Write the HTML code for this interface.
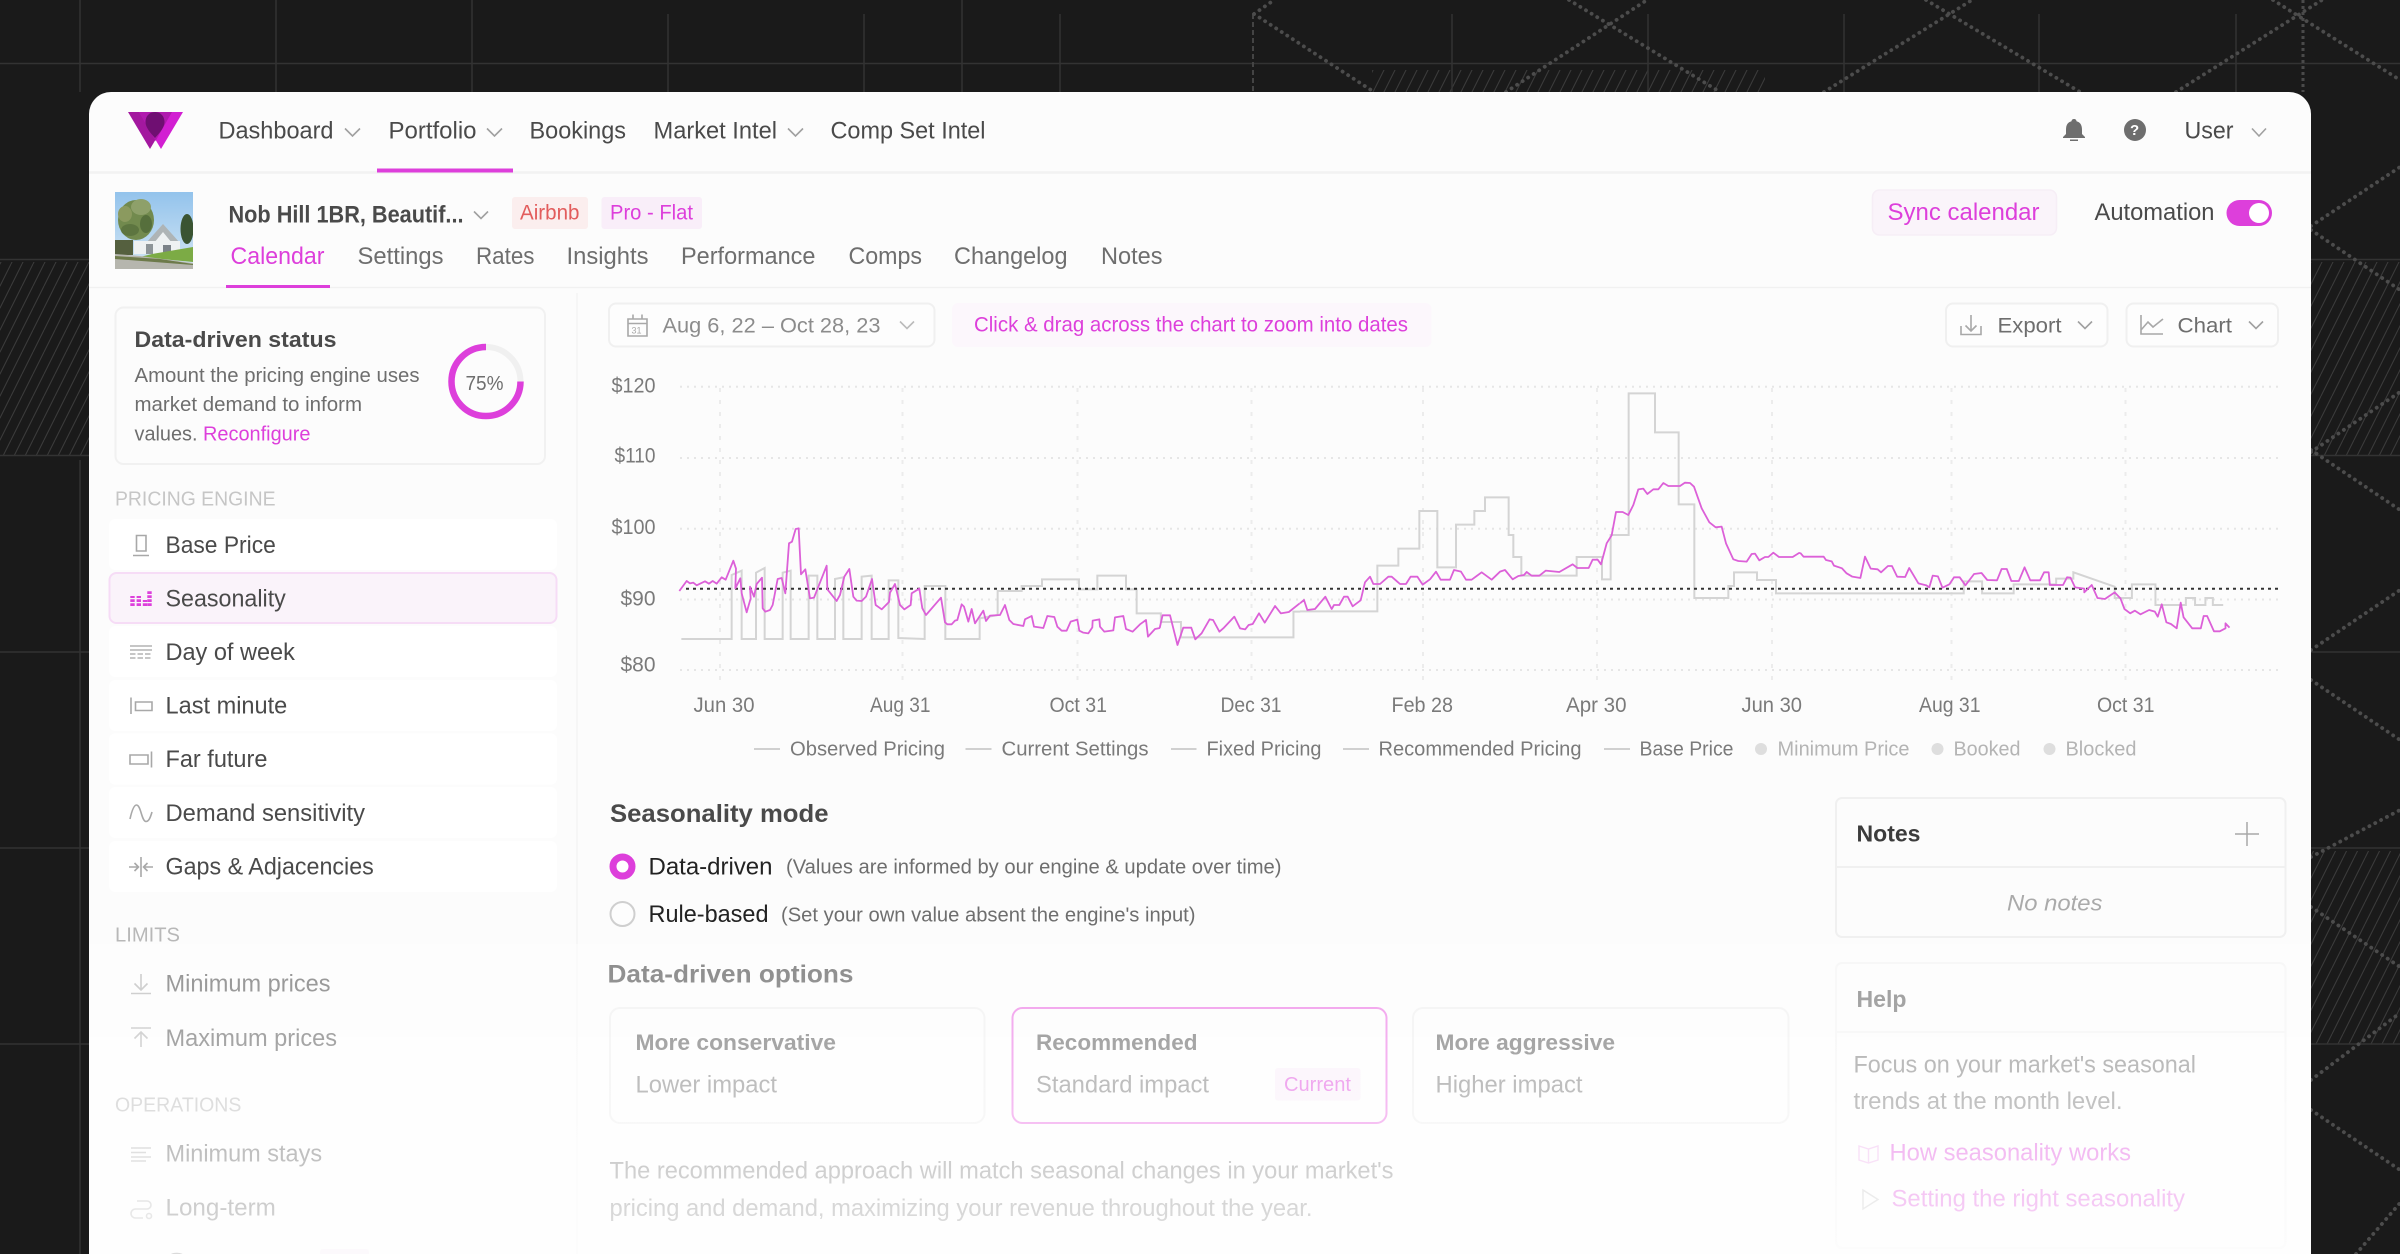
<!DOCTYPE html>
<html><head><meta charset="utf-8"><title>Seasonality</title>
<style>
html,body{margin:0;padding:0;background:#1a1a1a;width:2400px;height:1254px;overflow:hidden}
svg{display:block}
text{font-family:"Liberation Sans",sans-serif;fill:#4a4a4a;font-size:24px;transform:translate(-.5px,-.7px)}
.b{font-weight:700}
.s{font-size:20px;fill:#6e6e6e}
.t{font-size:21px;fill:#7a7a7a}
.m{fill:#dd3fdb}
.l{font-size:20px;fill:#7a7a7a}
.q{font-size:20px;fill:#b4b4b4}
.ic{fill:none;stroke:#a8a8a8;stroke-width:1.6}
.ch{fill:none;stroke:#a0a0a0;stroke-width:1.6}
.ns{vector-effect:non-scaling-stroke}
</style></head><body>
<svg xmlns="http://www.w3.org/2000/svg" width="2400" height="1254" viewBox="0 0 2400 1254">
<defs>
<pattern id="h" width="11" height="22" patternUnits="userSpaceOnUse"><path d="M11,0L0,22M0,0L-1,2M12,20L11,22" stroke="#3c3c3c" stroke-width="1" fill="none"/></pattern>
</defs>
<rect width="2400" height="1254" fill="#1a1a1a"/>
<!-- hatches -->
<rect x="0" y="262" width="89" height="193" fill="url(#h)"/>
<rect x="2311" y="262" width="89" height="193" fill="url(#h)"/>
<rect x="2311" y="851" width="89" height="193" fill="url(#h)"/>
<rect x="1372" y="70" width="393" height="22" fill="url(#h)"/>
<!-- grid -->
<g stroke="#333" stroke-width="1.5" fill="none">
<path d="M0,63.5H2400M0,259.5H89M2311,259.5H2400M0,455.5H89M2311,455.5H2400M0,652H89M2311,652H2400M0,848H89M2311,848H2400M0,1044H89M2311,1044H2400"/>
<path d="M80,0V92M276,0V92M472,0V92M962,0V92M668,14V92M864,14V92M1060,14V92M1452,14V92M1648,14V92M1844,14V92M2039,14V92M2236,14V92M80,460V1254"/>
</g>
<path d="M1253,14V92" stroke="#444" stroke-width="2" stroke-dasharray="5 3" fill="none"/>
<path d="M2303,0V92" stroke="#4a4a4a" stroke-width="3" stroke-dasharray="3 3" fill="none"/>
<!-- dotted lattice -->
<g stroke="#4c4c4c" stroke-width="3.8" stroke-linecap="round" stroke-dasharray="0.1 6.5" fill="none">
<path d="M1254,14L1274,0M1254,14L1374,92M1506,92L1647,0M1569,0L1720,92M1824,92L1972,0M1926,0L2080,92M2176,92L2322,0M2273,0L2400,80"/>
<path d="M2311,226L2400,167M2311,230L2400,290M2311,452L2400,392M2311,450L2400,510M2311,650L2400,590M2311,680L2400,740M2311,857L2400,810M2311,907L2400,967M2311,1080L2400,1013M2311,1110L2400,1170M2356,1254L2400,1203"/>
</g>
<!-- card -->
<path d="M89,1254V114a22,22 0 0 1 22,-22H2289a22,22 0 0 1 22,22V1254Z" fill="#fcfcfc"/>
<path d="M89,172.5H2311" stroke="#f2f2f2" stroke-width="2.4"/>
<path d="M89,287.5H2311" stroke="#f1f1f1" stroke-width="1.6"/>
<path d="M577,293V1254" stroke="#f6f6f6" stroke-width="2"/>
<!-- logo -->
<polygon points="128,112 172,112 150,149" fill="#a3189f"/>
<polygon points="139,112 183,112 161,149" fill="#d21fd2"/>
<polygon points="139,112 172,112 155.5,141" fill="#b01aae"/>
<path d="M155,112c-6,0 -9.5,4.5 -9.5,10c0,6 6,12 9.5,16c3.5,-4 9.5,-10 9.5,-16c0,-5.500 -3.500,-10 -9.500,-10Z" fill="#6f0f72"/>
<!-- nav -->
<text x="219" y="139" textLength="115" lengthAdjust="spacingAndGlyphs">Dashboard</text>
<path class="ch" d="M345,128.500L352.500,136L360,128.500"/>
<text x="389" y="139" textLength="88" lengthAdjust="spacingAndGlyphs">Portfolio</text>
<path class="ch" d="M487,128.500L494.500,136L502,128.500"/>
<rect x="377" y="168.500" width="136" height="4" fill="#dd3fdb"/>
<text x="530" y="139" textLength="96.500" lengthAdjust="spacingAndGlyphs">Bookings</text>
<text x="654" y="139" textLength="123.500" lengthAdjust="spacingAndGlyphs">Market Intel</text>
<path class="ch" d="M788,128.500L795.500,136L803,128.500"/>
<text x="831" y="139" textLength="155" lengthAdjust="spacingAndGlyphs">Comp Set Intel</text>
<path d="M2074,119c-1.500,0 -2.500,1 -2.500,2.300C2067,122.500 2066,126 2066,130v4l-3,3v1h22v-1l-3,-3v-4c0,-4 -1,-7.500 -5.500,-8.700C2076.500,120 2075.500,119 2074,119ZM2070,139.500h8v1.500h-8Z" fill="#6e6e6e"/>
<circle cx="2135" cy="130" r="11" fill="#6e6e6e"/>
<text x="2130.500" y="135.500" style="font-size:15px;fill:#fff" class="b">?</text>
<text x="2185" y="139" textLength="49" lengthAdjust="spacingAndGlyphs">User</text>
<path class="ch" d="M2252,128.500L2259,136L2266,128.500"/>
<!-- thumbnail -->
<svg x="115" y="192" width="78" height="77" viewBox="115 192 78 77">
<defs><linearGradient id="sky" x1="0" y1="0" x2="0" y2="1"><stop offset="0" stop-color="#93c3ec"/><stop offset="1" stop-color="#d3e6f4"/></linearGradient></defs>
<rect x="115" y="192" width="78" height="77" fill="url(#sky)"/>
<ellipse cx="136" cy="220" rx="18" ry="20" fill="#728a4e"/>
<ellipse cx="141" cy="207" rx="10" ry="8" fill="#8ea06a"/>
<ellipse cx="125" cy="214" rx="7" ry="8" fill="#8b9a5f"/>
<ellipse cx="146" cy="224" rx="6" ry="9" fill="#566f3c"/>
<ellipse cx="130" cy="230" rx="9" ry="6" fill="#5d7540"/>
<ellipse cx="187" cy="229" rx="6.500" ry="15" fill="#3a5432"/>
<polygon points="146,243 163,224 180,243" fill="#aeb4b6"/>
<polygon points="154,243 163,232 172,243" fill="#eef1f2"/>
<rect x="134" y="241" width="46" height="13" fill="#eef1f2"/>
<rect x="146" y="244" width="7" height="10" fill="#8d9498"/>
<rect x="163" y="245" width="8" height="9" fill="#7b8288"/>
<rect x="115" y="240" width="18" height="15" fill="#55603f"/>
<polygon points="152,254 193,247 193,262 140,257" fill="#7cab45"/>
<polygon points="115,254 140,256 193,263 193,269 115,269" fill="#b6b6ae"/>
<polygon points="115,256 160,259 193,264 193,265 115,259" fill="#6d7a4a"/>
</svg>
<!-- header 2 -->
<text x="229" y="223" class="b" textLength="235" lengthAdjust="spacingAndGlyphs">Nob Hill 1BR, Beautif...</text>
<path class="ch" d="M474,211.500L481,218.500L488,211.500"/>
<rect x="512" y="197" width="76" height="32" rx="3" fill="#fbeeee"/>
<text x="520.500" y="220" style="font-size:21px;fill:#e25c5c" textLength="59.500" lengthAdjust="spacingAndGlyphs">Airbnb</text>
<rect x="601.500" y="197" width="100.500" height="32" rx="3" fill="#f9eef9"/>
<text x="610.500" y="220" class="m" style="font-size:21px" textLength="83" lengthAdjust="spacingAndGlyphs">Pro - Flat</text>
<text x="231" y="264.500" class="m" textLength="94" lengthAdjust="spacingAndGlyphs">Calendar</text>
<g style="fill:#6e6e6e">
<text x="358" y="264.500" style="fill:#6e6e6e" textLength="86" lengthAdjust="spacingAndGlyphs">Settings</text>
<text x="476.500" y="264.500" style="fill:#6e6e6e" textLength="58.500" lengthAdjust="spacingAndGlyphs">Rates</text>
<text x="567" y="264.500" style="fill:#6e6e6e" textLength="82" lengthAdjust="spacingAndGlyphs">Insights</text>
<text x="681.500" y="264.500" style="fill:#6e6e6e" textLength="134.500" lengthAdjust="spacingAndGlyphs">Performance</text>
<text x="849" y="264.500" style="fill:#6e6e6e" textLength="73.500" lengthAdjust="spacingAndGlyphs">Comps</text>
<text x="954.500" y="264.500" style="fill:#6e6e6e" textLength="113.500" lengthAdjust="spacingAndGlyphs">Changelog</text>
<text x="1101.500" y="264.500" style="fill:#6e6e6e" textLength="61.500" lengthAdjust="spacingAndGlyphs">Notes</text>
</g>
<rect x="226" y="285" width="104" height="3" fill="#dd3fdb"/>
<rect x="1872.500" y="190" width="184" height="45" rx="7" fill="#faf4fa" stroke="#f6eef6" stroke-width="1.500"/>
<text x="1888" y="220.500" class="m" textLength="152" lengthAdjust="spacingAndGlyphs">Sync calendar</text>
<text x="2095" y="220.500" textLength="120" lengthAdjust="spacingAndGlyphs">Automation</text>
<rect x="2226.500" y="200" width="45.500" height="26" rx="13" fill="#dd3fdb"/>
<circle cx="2259" cy="213" r="10" fill="#fff"/>
<!-- status card -->
<rect x="115.500" y="307.500" width="429.500" height="156.500" rx="8" fill="#fcfcfc" stroke="#f1f1f1" stroke-width="2"/>
<text x="135" y="347.500" class="b" style="font-size:22px" textLength="202" lengthAdjust="spacingAndGlyphs">Data-driven status</text>
<text x="135" y="382.500" class="s" textLength="285" lengthAdjust="spacingAndGlyphs">Amount the pricing engine uses</text>
<text x="135" y="411.500" class="s" textLength="227.500" lengthAdjust="spacingAndGlyphs">market demand to inform</text>
<text x="135" y="441" class="s" textLength="63" lengthAdjust="spacingAndGlyphs">values.</text>
<text x="203.500" y="441" class="s m" style="fill:#dd3fdb" textLength="107.500" lengthAdjust="spacingAndGlyphs">Reconfigure</text>
<circle cx="486" cy="381.500" r="34.500" fill="none" stroke="#f0f0f0" stroke-width="6"/>
<path d="M520.500,381.500A34.500,34.500 0 1 1 486,347" fill="none" stroke="#dd3fdb" stroke-width="6.500"/>
<text x="466" y="390.500" class="s" textLength="38" lengthAdjust="spacingAndGlyphs">75%</text>
<!-- sidebar -->
<text x="115.500" y="506" style="font-size:20px;fill:#c6c6c6" textLength="160.500" lengthAdjust="spacingAndGlyphs">PRICING ENGINE</text>
<g fill="#fff">
<rect x="109" y="519" width="448" height="51" rx="6"/>
<rect x="109" y="626" width="448" height="51" rx="6"/>
<rect x="109" y="680" width="448" height="51" rx="6"/>
<rect x="109" y="733.500" width="448" height="51" rx="6"/>
<rect x="109" y="787" width="448" height="51" rx="6"/>
<rect x="109" y="841" width="448" height="51" rx="6"/>
</g>
<rect x="109.500" y="573" width="447" height="50" rx="7" fill="#faf3fa" stroke="#f6dcf6" stroke-width="2"/>
<text x="166" y="553.500" textLength="110.300" lengthAdjust="spacingAndGlyphs">Base Price</text>
<text x="166" y="607" textLength="120.300" lengthAdjust="spacingAndGlyphs">Seasonality</text>
<text x="166" y="660.500" textLength="129.400" lengthAdjust="spacingAndGlyphs">Day of week</text>
<text x="166" y="714" textLength="121.800" lengthAdjust="spacingAndGlyphs">Last minute</text>
<text x="166" y="767.500" textLength="101.900" lengthAdjust="spacingAndGlyphs">Far future</text>
<text x="166" y="821.500" textLength="199.500" lengthAdjust="spacingAndGlyphs">Demand sensitivity</text>
<text x="166" y="875" textLength="208.300" lengthAdjust="spacingAndGlyphs">Gaps &amp; Adjacencies</text>
<text x="115.500" y="942.300" style="font-size:20px;fill:#b8b8b8" textLength="65" lengthAdjust="spacingAndGlyphs">LIMITS</text>
<text x="166" y="992.300" textLength="165" lengthAdjust="spacingAndGlyphs">Minimum prices</text>
<text x="166" y="1046.500" textLength="171.500" lengthAdjust="spacingAndGlyphs">Maximum prices</text>
<text x="115.500" y="1112.300" style="font-size:20px;fill:#b0b0b0" textLength="126.400" lengthAdjust="spacingAndGlyphs">OPERATIONS</text>
<text x="166" y="1162.300" textLength="156.600" lengthAdjust="spacingAndGlyphs">Minimum stays</text>
<text x="166" y="1216.300" textLength="110.300" lengthAdjust="spacingAndGlyphs">Long-term</text>
<text x="166" y="1270" textLength="145" lengthAdjust="spacingAndGlyphs">Occupancy</text>
<rect x="320" y="1249" width="49" height="20" rx="3" fill="#f3e6f3"/>
<!-- sidebar icons -->
<path class="ic" d="M136.500,535.500H146V551H136.500ZM133,555.500H149"/>
<g fill="none" stroke="#dd3fdb" stroke-width="4.400" stroke-dasharray="2.700 1.300">
<path d="M132.500,606V596M138.800,606V596M145,606V600"/>
<path d="M149.500,606V591"/>
</g>
<g fill="none" stroke="#b4b4b4" stroke-width="1.500">
<path d="M130,646H152M130,650H152"/>
<path d="M130,654H152M130,658H152" stroke-dasharray="5.500 2"/>
</g>
<path class="ic" d="M131,697.500V714M135.500,702H152V710.500H135.500Z"/>
<path class="ic" d="M130,755H148V764H130ZM151.500,751.500V767.500"/>
<path class="ic" d="M130,819C132,810 134,805 136.500,805C141,805 141.500,821.500 146,821.500C149,821.500 150.500,817 152,812"/>
<path class="ic" d="M141,857V877M129,867H138M134.500,863L138.500,867L134.500,871M153,867H144M147.500,863L143.500,867L147.500,871"/>
<path class="ic" d="M141,974V990M134.500,983.500L141,990L147.500,983.500M131,993.500H151"/>
<path class="ic" d="M131,1028H151M141,1047V1032M134.500,1038.500L141,1032L147.500,1038.500"/>
<path class="ic" d="M131,1148H151M131,1152.500H146M131,1157H151M131,1161H146"/>
<path class="ic" d="M137,1201H147a4,4 0 0 1 0,8H135.500a4.500,4.500 0 0 0 0,9H143"/>
<circle class="ic" cx="149" cy="1216" r="2.500"/>
<!-- toolbar -->
<rect x="609" y="303.500" width="325.500" height="43" rx="7" fill="#fdfdfd" stroke="#f0f0f0" stroke-width="2"/>
<path class="ic" d="M628,319H647V336H628ZM628,323.500H647M633,314.500V319M642,314.500V319"/>
<text x="632" y="334" style="font-size:9px;fill:#a8a8a8">31</text>
<text x="663" y="333" style="font-size:21px;fill:#8c8c8c" textLength="218" lengthAdjust="spacingAndGlyphs">Aug 6, 22 – Oct 28, 23</text>
<path class="ch" style="stroke:#bbb" d="M900,321.500L907,328.500L914,321.500"/>
<rect x="952" y="303" width="479.500" height="44" rx="6" fill="#fcf7fc"/>
<text x="974.500" y="332" class="m" style="font-size:21px" textLength="434" lengthAdjust="spacingAndGlyphs">Click &amp; drag across the chart to zoom into dates</text>
<rect x="1946" y="303.500" width="161.500" height="43" rx="7" fill="#fdfdfd" stroke="#f0f0f0" stroke-width="2"/>
<path class="ic" d="M1971,315V331M1965.500,325.500L1971,331L1976.500,325.500M1961,326V334.500H1981V326"/>
<text x="1998" y="333" style="font-size:21px;fill:#6e6e6e" textLength="64" lengthAdjust="spacingAndGlyphs">Export</text>
<path class="ch" d="M2078,321.500L2085,328.500L2092,321.500"/>
<rect x="2126.500" y="303.500" width="151.500" height="43" rx="7" fill="#fdfdfd" stroke="#f0f0f0" stroke-width="2"/>
<path class="ic" d="M2141,315V334H2163M2141,330L2148,322L2153,327L2163,319"/>
<text x="2178" y="333" style="font-size:21px;fill:#6e6e6e" textLength="54.500" lengthAdjust="spacingAndGlyphs">Chart</text>
<path class="ch" d="M2249,321.500L2256,328.500L2263,321.500"/>
<!-- chart grid -->
<g stroke="#e6e6e6" stroke-width="2" stroke-dasharray="2 5" fill="none">
<path d="M680,386.700H2278M680,458H2278M680,528.700H2278M680,599.500H2278M680,670H2278"/>
</g>
<g stroke="#ececec" stroke-width="2" stroke-dasharray="4 8" fill="none">
<path d="M720,388V686M902.500,388V686M1077.500,388V686M1251.500,388V686M1423,388V686M1597,388V686M1772,388V686M1951.500,388V686M2125.500,388V686"/>
</g>
<!-- grey line -->
<g fill="none" stroke="#d4d4d4" stroke-width="2">
<path class="ns" transform="translate(660 380) scale(.33333)" d="M64,777H215V585L245,572V777H288V578L314,564V777H368V578L392,572V777H446V587H472V777H525V597L550,592V777H605V590L635,587V777H686V601H715V774L794,777V618H856V777H959V715L1013,705V633H1085V618H1146V598H1257V628H1312V587H1398V628H1430V700H1500"/>
<path class="ns" transform="translate(600 360) scale(.57405 .33333)" d="M975,760H977V786H1012V832H1208V755H1220"/>
<path class="ns" transform="translate(1300 380) scale(.33333)" d="M0,694H232V557H295V506H358V393H412V562H468V434H523V393H555V352H626V465H640V531H664V587H830V531H906V598H932V465H986V40H1065V157H1136V373H1183V654H1285V618H1302V577H1371V600H1428V640H1500"/>
<path class="ns" transform="translate(1400 360) scale(.57405 .33333)" d="M697,700H982V664H1014V700H1069V673H1143V656H1173V637L1245,680V714H1275V673H1316V735H1369V714H1385V735H1403V714H1416V735H1434"/>
</g>
<path d="M686,588.700H2278" stroke="#333" stroke-width="2" stroke-dasharray="3 4" fill="none"/>
<!-- magenta line -->
<g fill="none" stroke="#dc60d8" stroke-width="1.8" stroke-linejoin="round">
<path class="ns" transform="translate(660 380) scale(.33333)" d="M58,633L80,603L90,610L100,608L110,616L135,604L147,611L158,603L170,611L185,592L197,599L220,542L228,566L226,625L241,595L245,640L260,697L272,655L270,620L282,650L290,612L306,593L308,685L316,695L330,690L338,675L353,597L365,594L376,640L387,490L396,485L407,447L416,445L423,583L436,568L450,655L462,653L500,557L502,628L530,663L540,645L553,590L568,567L580,650L590,662L605,663L618,650L636,597L647,675L665,688L687,666L690,638L705,612L720,675L733,688L752,675L755,640L778,626L787,685L798,705L843,653L855,727L862,733L875,733L885,722L892,720L905,673L912,680L925,725L935,687L945,730L970,692L978,723L990,707L1020,705L1035,675L1048,720L1060,732L1090,738L1095,718L1115,708L1122,740L1150,744L1162,708L1183,711L1192,740L1205,752L1220,752L1232,725L1252,719L1258,752L1270,758L1285,760L1297,742L1298,722L1318,718L1320,740L1333,755L1360,751L1365,712L1390,708L1398,747L1418,755L1440,733L1458,720L1464,770L1485,747L1500,744"/>
<path class="ns" transform="translate(600 360) scale(.57405 .33333)" d="M975,804L980,766L993,766L1006,855L1016,803L1030,803L1037,838L1048,820L1062,778L1068,780L1079,815L1087,803L1105,770L1115,805L1124,808L1130,795L1137,792L1148,760L1158,788L1176,738L1186,760L1200,756L1219,730"/>
<path class="ns" transform="translate(1300 380) scale(.33333)" d="M0,670L12,660L22,690L45,687L76,650L95,687L102,675L118,675L132,650L143,650L158,679L182,661L195,607L210,590L220,612L240,612L265,590L275,590L300,612L318,612L332,590L352,590L368,614L390,598L408,575L422,599L450,599L462,570L483,575L498,599L515,599L530,588L545,577L575,599L600,575L615,570L638,598L655,588L672,585L680,576L695,587L718,587L737,572L778,576L818,553L832,564L866,564L878,539L893,539L903,553L920,490L935,466L948,396L968,396L985,405L1000,375L1015,328L1030,326L1042,342L1060,328L1075,328L1090,309L1105,318L1140,318L1155,308L1170,309L1182,320L1205,385L1228,427L1247,442L1265,440L1278,490L1300,538L1315,543L1340,545L1355,522L1365,521L1378,541L1395,531L1405,531L1420,518L1437,531L1478,531L1497,519L1500,519"/>
<path class="ns" transform="translate(1400 360) scale(.57405 .33333)" d="M697,578L703,590L738,590L742,600L752,604L756,617L770,625L778,640L788,650L802,654L810,590L820,626L832,628L838,637L850,618L857,618L866,650L880,651L887,624L903,670L917,676L922,682L928,647L937,649L945,683L957,673L965,652L975,652L985,676L1000,642L1013,639L1023,660L1040,661L1048,627L1057,627L1065,663L1078,663L1088,622L1098,661L1115,661L1122,637L1130,637L1132,675L1155,675L1162,652L1168,653L1176,682L1192,686L1192,697L1205,675L1215,714L1228,717L1245,697L1255,715L1262,747L1272,760L1280,752L1290,763L1305,750L1315,755L1320,770L1327,733L1335,787L1343,792L1353,805L1360,728L1365,772L1380,805L1395,805L1400,768L1406,768L1418,814L1428,814L1438,805L1438,790L1445,803"/>
</g>
<!-- chart labels -->
<text x="612" y="393" class="t" textLength="44" lengthAdjust="spacingAndGlyphs">$120</text>
<text x="615" y="463" class="t" textLength="41" lengthAdjust="spacingAndGlyphs">$110</text>
<text x="612" y="534.500" class="t" textLength="44" lengthAdjust="spacingAndGlyphs">$100</text>
<text x="621" y="606" class="t" textLength="35" lengthAdjust="spacingAndGlyphs">$90</text>
<text x="621" y="672" class="t" textLength="35" lengthAdjust="spacingAndGlyphs">$80</text>
<text x="694" y="712.700" class="t" textLength="61" lengthAdjust="spacingAndGlyphs">Jun 30</text>
<text x="870.500" y="712.700" class="t" textLength="60.500" lengthAdjust="spacingAndGlyphs">Aug 31</text>
<text x="1050" y="712.700" class="t" textLength="57.500" lengthAdjust="spacingAndGlyphs">Oct 31</text>
<text x="1221" y="712.700" class="t" textLength="61" lengthAdjust="spacingAndGlyphs">Dec 31</text>
<text x="1392" y="712.700" class="t" textLength="61.500" lengthAdjust="spacingAndGlyphs">Feb 28</text>
<text x="1566.500" y="712.700" class="t" textLength="60.500" lengthAdjust="spacingAndGlyphs">Apr 30</text>
<text x="1742" y="712.700" class="t" textLength="60.500" lengthAdjust="spacingAndGlyphs">Jun 30</text>
<text x="1919.500" y="712.700" class="t" textLength="61.500" lengthAdjust="spacingAndGlyphs">Aug 31</text>
<text x="2097.500" y="712.700" class="t" textLength="57.500" lengthAdjust="spacingAndGlyphs">Oct 31</text>
<!-- legend -->
<path d="M754,749H780M965.500,749H991.500M1171,749H1196.500M1343,749H1369M1604,749H1630" stroke="#d0d0d0" stroke-width="2"/>
<text x="790.500" y="756" class="l" textLength="155" lengthAdjust="spacingAndGlyphs">Observed Pricing</text>
<text x="1002" y="756" class="l" textLength="147" lengthAdjust="spacingAndGlyphs">Current Settings</text>
<text x="1207" y="756" class="l" textLength="115" lengthAdjust="spacingAndGlyphs">Fixed Pricing</text>
<text x="1379" y="756" class="l" textLength="203" lengthAdjust="spacingAndGlyphs">Recommended Pricing</text>
<text x="1640" y="756" class="l" textLength="94" lengthAdjust="spacingAndGlyphs">Base Price</text>
<circle cx="1761" cy="749" r="6" fill="#dedede"/><circle cx="1937.500" cy="749" r="6" fill="#dedede"/><circle cx="2049.500" cy="749" r="6" fill="#dedede"/>
<text x="1778" y="756" class="q" textLength="132" lengthAdjust="spacingAndGlyphs">Minimum Price</text>
<text x="1954" y="756" class="q" textLength="67" lengthAdjust="spacingAndGlyphs">Booked</text>
<text x="2066" y="756" class="q" textLength="71" lengthAdjust="spacingAndGlyphs">Blocked</text>
<!-- mode -->
<text x="610.500" y="822.500" class="b" style="font-size:25px" textLength="218.500" lengthAdjust="spacingAndGlyphs">Seasonality mode</text>
<circle cx="622.500" cy="866.500" r="9.500" fill="#fff" stroke="#dd3fdb" stroke-width="7"/>
<text x="649" y="875" style="fill:#222" textLength="124" lengthAdjust="spacingAndGlyphs">Data-driven</text>
<text x="786.500" y="874" class="s" textLength="495.500" lengthAdjust="spacingAndGlyphs">(Values are informed by our engine &amp; update over time)</text>
<circle cx="622.500" cy="914" r="12" fill="#fdfdfd" stroke="#cfcfcf" stroke-width="2"/>
<text x="649" y="922.500" style="fill:#222" textLength="120" lengthAdjust="spacingAndGlyphs">Rule-based</text>
<text x="781.500" y="922" class="s" textLength="414.500" lengthAdjust="spacingAndGlyphs">(Set your own value absent the engine's input)</text>
<text x="608" y="983.300" class="b" style="font-size:25px;fill:#3c3c3c" textLength="246" lengthAdjust="spacingAndGlyphs">Data-driven options</text>
<!-- option cards -->
<rect x="610" y="1008" width="374.500" height="115" rx="10" fill="#fcfcfc" stroke="#ececec" stroke-width="2"/>
<rect x="1012.500" y="1008" width="374" height="115" rx="10" fill="#fcfcfc" stroke="#e860e0" stroke-width="2"/>
<rect x="1413" y="1008" width="375.500" height="115" rx="10" fill="#fcfcfc" stroke="#ececec" stroke-width="2"/>
<text x="636" y="1050.700" class="b" style="font-size:22px" textLength="200.500" lengthAdjust="spacingAndGlyphs">More conservative</text>
<text x="1036.500" y="1050.700" class="b" style="font-size:22px" textLength="161.500" lengthAdjust="spacingAndGlyphs">Recommended</text>
<text x="1436" y="1050.700" class="b" style="font-size:22px" textLength="179.500" lengthAdjust="spacingAndGlyphs">More aggressive</text>
<text x="636" y="1093.300" style="fill:#6e6e6e" textLength="141.500" lengthAdjust="spacingAndGlyphs">Lower impact</text>
<text x="1036.500" y="1093.300" style="fill:#6e6e6e" textLength="173" lengthAdjust="spacingAndGlyphs">Standard impact</text>
<text x="1436" y="1093.300" style="fill:#6e6e6e" textLength="147" lengthAdjust="spacingAndGlyphs">Higher impact</text>
<rect x="1275" y="1068" width="85.500" height="32.500" rx="3" fill="#f8ecf8"/>
<text x="1284.500" y="1091.700" class="m" style="font-size:20px" textLength="67" lengthAdjust="spacingAndGlyphs">Current</text>
<text x="610" y="1179.300" style="fill:#6c6c6c" textLength="784" lengthAdjust="spacingAndGlyphs">The recommended approach will match seasonal changes in your market's</text>
<text x="610" y="1216.700" style="fill:#6c6c6c" textLength="703" lengthAdjust="spacingAndGlyphs">pricing and demand, maximizing your revenue throughout the year.</text>
<!-- notes -->
<rect x="1836" y="798" width="449.500" height="139" rx="6" fill="#fcfcfc" stroke="#f0f0f0" stroke-width="2"/>
<path d="M1836,867H2285.500" stroke="#f0f0f0" stroke-width="2"/>
<text x="1857" y="842.300" class="b" style="font-size:23px;fill:#3c3c3c" textLength="64" lengthAdjust="spacingAndGlyphs">Notes</text>
<path d="M2235,834H2259M2247,822V846" stroke="#a8a8a8" stroke-width="1.500" fill="none"/>
<text x="2007.500" y="911" style="font-size:22px;font-style:italic;fill:#aaa" textLength="95.500" lengthAdjust="spacingAndGlyphs">No notes</text>
<!-- help -->
<rect x="1836" y="963" width="449.500" height="285" rx="6" fill="#fcfcfc" stroke="#f2f2f2" stroke-width="2"/>
<path d="M1836,1032H2285.500" stroke="#f2f2f2" stroke-width="2"/>
<text x="1857" y="1007.700" class="b" style="font-size:23px;fill:#555" textLength="50" lengthAdjust="spacingAndGlyphs">Help</text>
<text x="1854" y="1073.300" style="fill:#6e6e6e" textLength="342.500" lengthAdjust="spacingAndGlyphs">Focus on your market's seasonal</text>
<text x="1854" y="1109.500" style="fill:#6e6e6e" textLength="269" lengthAdjust="spacingAndGlyphs">trends at the month level.</text>
<path d="M1859,1146L1868.500,1149L1878,1146V1160L1868.500,1163L1859,1160ZM1868.500,1149V1163" fill="none" stroke="#eda8ea" stroke-width="1.400"/>
<text x="1890" y="1161" class="m" textLength="241.500" lengthAdjust="spacingAndGlyphs">How seasonality works</text>
<path d="M1863,1190L1878,1199.500L1863,1209Z" fill="none" stroke="#bbb" stroke-width="1.400"/>
<text x="1892" y="1207" class="m" textLength="293.500" lengthAdjust="spacingAndGlyphs">Setting the right seasonality</text>
<!-- fade overlay -->
<defs><linearGradient id="f" x1="0" y1="0" x2="0" y2="1"><stop offset="0" stop-color="#fff" stop-opacity=".4"/><stop offset=".45" stop-color="#fff" stop-opacity=".55"/><stop offset="1" stop-color="#fefefe" stop-opacity=".8"/></linearGradient></defs>
<rect x="89" y="944" width="2222" height="310" fill="url(#f)"/>
</svg>
</body></html>
